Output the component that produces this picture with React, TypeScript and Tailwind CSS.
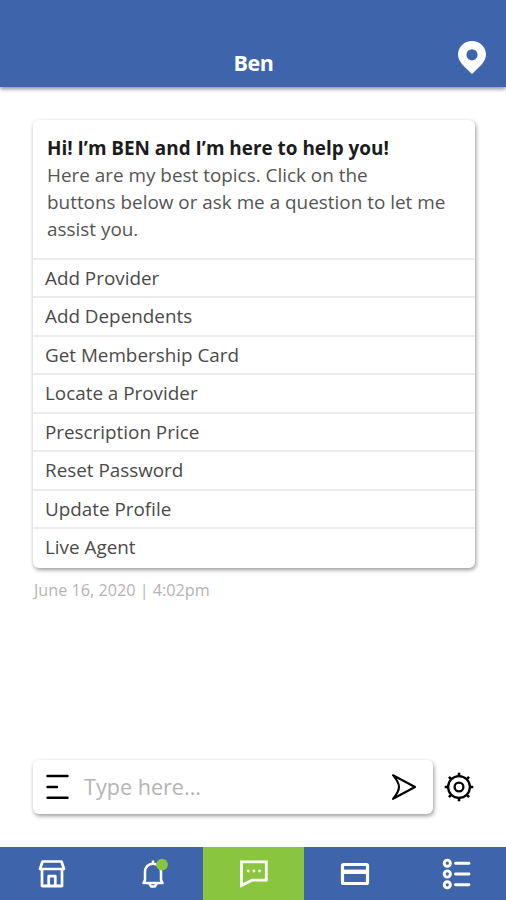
import { clsx } from 'clsx'
import type { ReactNode } from 'react'

const topics = [
    'Add Provider',
    'Add Dependents',
    'Get Membership Card',
    'Locate a Provider',
    'Prescription Price',
    'Reset Password',
    'Update Profile',
    'Live Agent',
]

const PinIcon = () => (
    <svg width="30" height="35" viewBox="0 0 30 35" fill="none">
        <path
            d="M15 1C7.2 1 1 7.1 1 14.5C1 22 8 27 15 34C22 27 29 22 29 14.5C29 7.1 22.8 1 15 1ZM15 9.2A5.6 5.6 0 1 1 15 20.4A5.6 5.6 0 1 1 15 9.2Z"
            fill="white"
            fillRule="evenodd"
        />
    </svg>
)

const MenuIcon = () => (
    <svg width="24" height="28" viewBox="0 0 24 28" stroke="black" strokeWidth="2.4" strokeLinecap="round">
        <path d="M2.5 3H22.5M2.5 14H12M2.5 24.7H22.5" />
    </svg>
)

const SendIcon = () => (
    <svg width="26" height="28" viewBox="0 0 26 28" fill="none" stroke="black" strokeWidth="2.1" strokeLinejoin="round">
        <path d="M2 2.2L24 14L2 25.8C6 21 8 17.5 8 14C8 10.5 6 7 2 2.2Z" />
    </svg>
)

const GearIcon = () => (
    <svg width="30" height="30" viewBox="0 0 30 30" fill="none" stroke="black">
        <circle cx="15" cy="15" r="10.9" strokeWidth="2.3" />
        <circle cx="15" cy="15" r="4.4" strokeWidth="2.3" />
        <g strokeWidth="2.6">
            <path d="M15 .7V4M15 26V29.3M.7 15H4M26 15H29.3" />
            <path d="M4.9 4.9L7.2 7.2M22.8 22.8L25.1 25.1M4.9 25.1L7.2 22.8M22.8 7.2L25.1 4.9" />
        </g>
    </svg>
)

const StoreIcon = () => (
    <svg width="30" height="30" viewBox="0 0 30 30" fill="none" stroke="white" strokeWidth="2.7" strokeLinejoin="round">
        <path d="M5.5 2.5H24.5L27 10H3L5.5 2.5Z" />
        <path d="M5 10V27H25V10" />
        <path d="M11.7 27V17.2H18.3V27" />
        <path d="M15 21.5V27" stroke="#3e65ab" strokeWidth="2" />
        <path d="M5 27H25" />
    </svg>
)

const BellIcon = () => (
    <svg width="30" height="32" viewBox="0 0 30 32" fill="none" stroke="white" strokeWidth="2.5" strokeLinejoin="round">
        <path d="M15 2.5V6M15 5.8C10 5.8 7 9.3 7 13.5V22L5.5 25H24.5L23 22V13.5C23 9.3 20 5.8 15 5.8Z" />
        <path d="M11.3 25.5L13 28.5H17L18.7 25.5" />
        <circle cx="24" cy="6.6" r="5.9" fill="#87c440" stroke="none" />
    </svg>
)

const ChatIcon = () => (
    <svg width="30" height="30" viewBox="0 0 30 30" fill="none">
        <path d="M2.5 2.8H27.3V21.2H13L2.5 26.5V2.8Z" stroke="white" strokeWidth="2.8" />
        <g fill="white">
            <circle cx="9.3" cy="12" r="1.4" />
            <circle cx="14.9" cy="12" r="1.4" />
            <circle cx="20.5" cy="12" r="1.4" />
        </g>
    </svg>
)

const CardIcon = () => (
    <svg width="30" height="24" viewBox="0 0 30 24" fill="none" stroke="white">
        <rect x="2.5" y="2.5" width="25" height="19" rx="1" strokeWidth="3.2" />
        <path d="M3 9.8H27" strokeWidth="4.4" />
    </svg>
)

const ListIcon = () => (
    <svg width="30" height="32" viewBox="0 0 30 32" fill="none" stroke="white" strokeWidth="2.9">
        <circle cx="6.3" cy="5.2" r="3.1" />
        <circle cx="6.3" cy="16" r="3.1" />
        <circle cx="6.3" cy="26.8" r="3.1" />
        <path d="M14.5 5.2H28M14.5 16H28M14.5 26.8H28" strokeLinecap="round" />
    </svg>
)

const NavItem = ({ active, children }: { active?: boolean; children: ReactNode }) => (
    <button className={clsx('flex h-full w-[101.4px] items-center justify-center', active && 'bg-[#8ac53f]')}>
        {children}
    </button>
)

const App = () => {
    return (
        <div className="flex h-[900px] w-[506px] flex-col overflow-hidden bg-white font-['Open_Sans',sans-serif]">
            <header className="flex h-[87px] shrink-0 items-end justify-between bg-[#3e65ab] pr-[19px] pb-3 pl-5 shadow-[0_2px_4px_rgba(0,0,0,0.45)]">
                <div className="w-[30px]" />
                <h1 className="text-[21.5px] leading-6 font-bold tracking-[-0.5px] text-white">Ben</h1>
                <PinIcon />
            </header>
            <main className="flex flex-1 flex-col pt-[33px] pl-[33px]">
                <section className="h-[448px] w-[442px] rounded-md bg-white shadow-[1px_2px_4px_rgba(0,0,0,0.4)]">
                    <div className="h-[137.5px] pt-[15px] pl-[14px] text-[18.9px] leading-[27px] whitespace-nowrap text-[#555]">
                        <p className="font-bold text-[#1c1c1c]">Hi! I’m BEN and I’m here to help you!</p>
                        <p>
                            Here are my best topics. Click on the
                            <br />
                            buttons below or ask me a question to let me
                            <br />
                            assist you.
                        </p>
                    </div>
                    <ul>
                        {topics.map((topic) => (
                            <li
                                key={topic}
                                className="flex h-[38.5px] items-center border-t-2 border-[#ececec] pl-3 text-[18.85px] text-[#4a4a4a]"
                            >
                                {topic}
                            </li>
                        ))}
                    </ul>
                </section>
                <time className="mt-[10px] ml-px text-[16.2px] leading-6 text-[#b4b4b4]">June 16, 2020 | 4:02pm</time>
                <div className="mt-auto mb-[33px] flex items-center">
                    <div className="flex h-[54px] w-[400px] items-center rounded-md bg-white pr-4 pl-3 shadow-[1px_2px_4px_rgba(0,0,0,0.4)]">
                        <MenuIcon />
                        <span className="ml-[15px] flex-1 text-[21.6px] text-[#b4b4b4]">Type here...</span>
                        <SendIcon />
                    </div>
                    <button className="ml-[11px]">
                        <GearIcon />
                    </button>
                </div>
            </main>
            <nav className="flex h-[53px] shrink-0 items-center bg-[#3e65ab] pl-px">
                <NavItem>
                    <StoreIcon />
                </NavItem>
                <NavItem>
                    <BellIcon />
                </NavItem>
                <NavItem active>
                    <ChatIcon />
                </NavItem>
                <NavItem>
                    <CardIcon />
                </NavItem>
                <NavItem>
                    <ListIcon />
                </NavItem>
            </nav>
        </div>
    )
}

export default App
